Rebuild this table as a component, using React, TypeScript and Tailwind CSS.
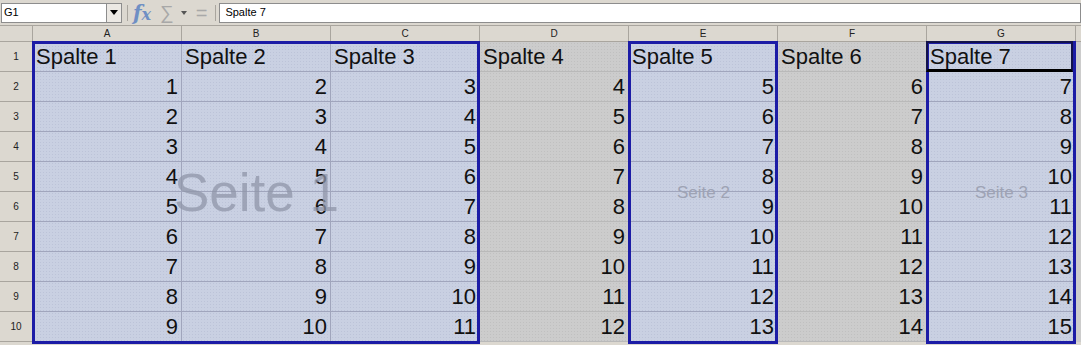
import { Fragment } from 'react';

const COLS = ['A', 'B', 'C', 'D', 'E', 'F', 'G'];
// columns that belong to a print range
const PRINTED = [true, true, true, false, true, false, true];

const GRID = 'grid grid-cols-[33px_repeat(7,149px)_1fr] grid-rows-[16px_repeat(10,30px)_1fr]';

function cellValue(row: number, col: number) {
  if (row === 1) return `Spalte ${col + 1}`;
  return String(row - 1 + col);
}

function Toolbar() {
  return (
    <div className="h-[26px] flex items-center bg-[#dcd8d0] border-b border-[#a9a59e] text-[11px] text-black">
      {/* name box */}
      <div className="ml-px h-[20px] w-[121px] flex items-center bg-white border border-[#8d8d8d]">
        <span className="flex-1 pl-[2px]">G1</span>
        <div className="h-[18px] w-[15px] flex items-center justify-center bg-[#ece9e4] border-l border-[#8d8d8d]">
          <svg width="8" height="5" viewBox="0 0 8 5"><path d="M0 0h8L4 5z" fill="#000" /></svg>
        </div>
      </div>
      <div className="ml-[5px] h-[16px] w-px bg-[#a9a59e]" />
      <span className="ml-[5px] text-[20px] leading-none italic font-semibold text-[#6f8fc4] font-['DejaVu_Serif',serif]">
        f<span className="text-[16px]">x</span>
      </span>
      <span className="ml-[9px] text-[19px] leading-none text-[#a8a8a8]">∑</span>
      <svg className="ml-[7px]" width="6" height="4" viewBox="0 0 6 4"><path d="M0 0h6L3 4z" fill="#555" /></svg>
      <span className="ml-[9px] text-[20px] leading-none text-[#a8a8a8]">=</span>
      <div className="ml-[8px] h-[16px] w-px bg-[#a9a59e]" />
      <div className="ml-[3px] flex-1 h-[20px] flex items-center bg-white border border-[#8d8d8d] pl-[5px]">
        Spalte 7
      </div>
    </div>
  );
}

// page outlines, cursor and page labels drawn over the cells
function PageOverlay() {
  return (
    <div className={`${GRID} absolute inset-0 pointer-events-none`}>
      <div className="col-start-2 col-end-5 row-start-2 row-end-12 -mt-px -ml-px mb-[-2px] border-[3px] border-[#1c1ca6]" />
      <div className="col-start-6 col-end-7 row-start-2 row-end-12 -mt-px -ml-px mb-[-2px] border-[3px] border-[#1c1ca6]" />
      <div className="col-start-8 col-end-9 row-start-2 row-end-12 -mt-px -ml-px mb-[-2px] border-[3px] border-[#1c1ca6]" />
      <div className="col-start-8 col-end-9 row-start-2 row-end-3 -mt-px -ml-px mr-[3px] border-2 border-[#12124a] border-b-[3px] border-b-black" />

      <div className="col-start-2 col-end-5 row-start-2 row-end-12 flex items-center justify-center pt-[2px]">
        <span className="text-[53px] text-[#8f95a8]/75">Seite 1</span>
      </div>
      <div className="col-start-6 col-end-7 row-start-2 row-end-12 flex items-center justify-center pt-[2px]">
        <span className="text-[17px] text-[#9ea3b4]">Seite 2</span>
      </div>
      <div className="col-start-8 col-end-9 row-start-2 row-end-12 flex items-center justify-center pt-[2px]">
        <span className="text-[17px] text-[#9ea3b4]">Seite 3</span>
      </div>
    </div>
  );
}

function Sheet() {
  return (
    <div className="relative h-[319px]">
      <div className={`${GRID} h-full bg-[#dcd8d0]`}>
        {/* column headers */}
        <div className="border-r border-b border-[#a9a59e]" />
        {COLS.map(c => (
          <div key={c} className="border-r border-b border-[#a9a59e] flex items-center justify-center text-[10px] text-[#222]">
            {c}
          </div>
        ))}
        <div className="border-b border-[#a9a59e]" />

        {Array.from({ length: 10 }, (_, r) => {
          const row = r + 1;
          return (
            <Fragment key={row}>
              <div className="border-r border-b border-[#a9a59e] flex items-center justify-center text-[10px] text-[#222]">
                {row}
              </div>
              {COLS.map((c, i) => (
                <div
                  key={c}
                  className={`flex items-end pb-[2px] px-[3px] text-[22px] leading-[24px] text-[#111] border-r border-b bg-[length:3px_3px] ${
                    PRINTED[i]
                      ? 'bg-[#c9d0e2] bg-[radial-gradient(#bcc3d8_0.6px,transparent_0.7px)] border-[#a0a5bc]'
                      : 'bg-[#cccccc] bg-[radial-gradient(#c0c0c0_0.6px,transparent_0.7px)] border-[#b9b9b9]'
                  } ${row === 1 ? 'justify-start' : 'justify-end'}`}
                >
                  {cellValue(row, i)}
                </div>
              ))}
              <div className="bg-[#cccccc]" />
            </Fragment>
          );
        })}
      </div>
      <PageOverlay />
    </div>
  );
}

export default function App() {
  return (
    <div className="w-[1081px] h-[345px] overflow-hidden bg-[#dcd8d0] font-['Liberation_Sans',Arial,sans-serif]">
      <Toolbar />
      <Sheet />
    </div>
  );
}
